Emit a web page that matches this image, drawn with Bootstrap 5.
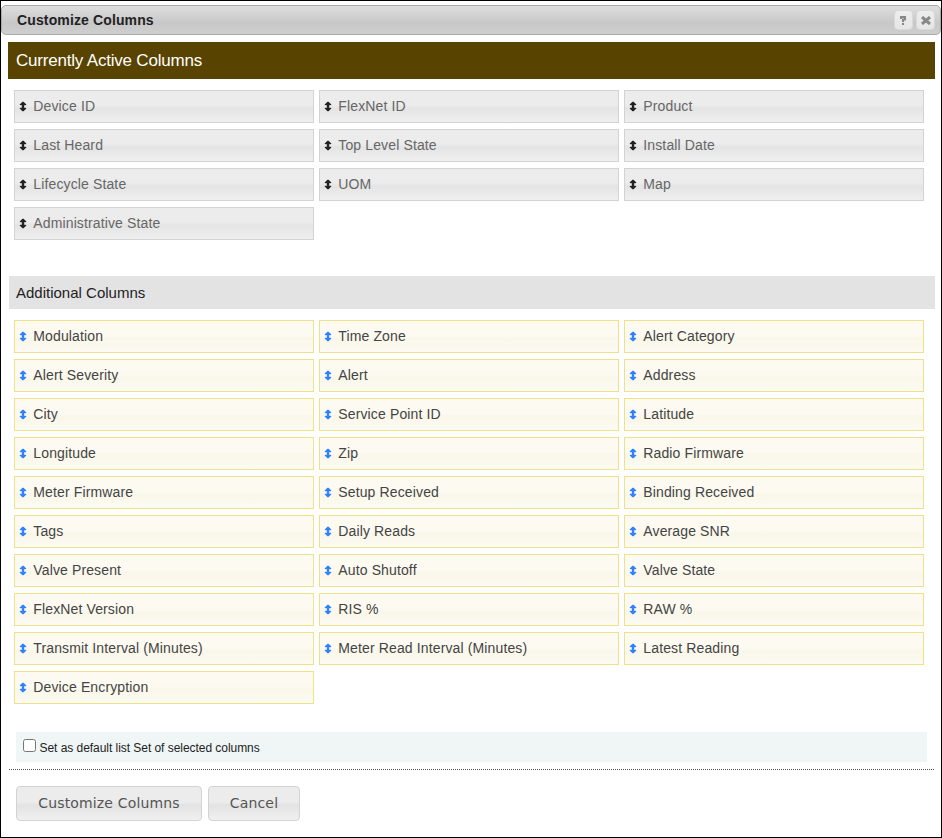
<!DOCTYPE html>
<html lang="en">
<head>
<meta charset="utf-8">
<title>Customize Columns</title>
<link href="https://cdn.jsdelivr.net/npm/bootstrap@5.3.0/dist/css/bootstrap.min.css" rel="stylesheet">
<style>
body{font-family:"Liberation Sans",Arial,sans-serif;background:#fff}
.dialog-frame{height:838px;border:1px solid #000;padding:4px 0 0}
.title-strip{height:30px;border:1px solid #aaa;border-radius:5px;background:linear-gradient(#dedede,#c8c8c8 60%,#cecece);padding:0 5px 0 15px}
.title-strip h1{font-size:14px;letter-spacing:.13px;color:#222;line-height:28px}
.tool-btn{width:19px;height:20px;border:1px solid #d9d9d9;border-radius:4px;background:linear-gradient(#ededed,#e6e6e6);padding:0;line-height:0}
.help-btn{margin-right:3px}
.active-head{height:37px;margin:7px 6px 0 7px;padding:0 8px;background:#594300;color:#fff;font-size:17px;letter-spacing:-.2px;line-height:37px}
.more-head{height:33px;margin:36px 6px 0 8px;padding:0 7px;background:#e3e3e3;color:#222;font-size:15px;line-height:33px}
.tiles{display:grid;grid-template-columns:repeat(3,300px);gap:6px 5px;margin:11px 0 0 13px;padding:0;list-style:none}
.tiles li{height:33px;border:1px solid #d3d3d3;background:linear-gradient(#ececec 0,#ececec 45%,#e4e4e4 55%,#efefef);color:#666;font-size:14px;letter-spacing:.13px;padding:0 5px}
.tiles svg{margin-right:7.3px;fill:#222;stroke:#222;stroke-width:.35px;overflow:visible}
.tiles span{line-height:30px;height:31px}
.tiles.extra li{border-color:#f0e08a;background:linear-gradient(#fdfaf2 0,#fcfaf1 48%,#f9f7e9 58%,#fcfbf3);color:#444}
.tiles.extra svg{fill:#2e83ff;stroke:#2e83ff}
.default-row{height:30px;margin:28px 14px 0 15px;padding:0 7px;background:#f0f6f6;color:#222;font-size:12px}
.default-row input{width:13px;height:13px;margin:0 3.5px 4px 0}
.default-row span{letter-spacing:-.045px;padding-top:2px}
.rule{margin:7px 7px 0 8px;border-top:1px dotted #555}
.action-row{margin:16px 0 0 15px;gap:6px}
.action-row button{height:35px;border:1px solid #d3d3d3;border-radius:4px;background:linear-gradient(#ececec 0,#ececec 45%,#e3e3e3 55%,#f0f0f0);color:#555;font-family:"DejaVu Sans",Verdana,sans-serif;font-size:14px;letter-spacing:.16px;line-height:33px;padding:0}
.save-btn{width:186px}
.cancel-btn{width:92px}
</style>
</head>
<body>
<svg class="d-none"><symbol id="arrows" viewBox="0 0 6 9" overflow="visible"><path d="M2 0h2v1h1v1h1v1H4v3h2v1H5v1H4v1H2V8H1V7H0V6h2V3H0V2h1V1h1z"/></symbol></svg>
<main class="dialog-frame">
<header class="title-strip d-flex align-items-center">
<h1 class="fw-bold mb-0 me-auto">Customize Columns</h1>
<button class="tool-btn help-btn" aria-label="Help"><svg width="7" height="9" viewBox="0 0 7 9" fill="none" stroke="#888" stroke-width="2"><path d="M1 3V1h4v2.5H3V6M2 8h2"/></svg></button>
<button class="tool-btn" aria-label="Close"><svg width="10" height="9" viewBox="0 0 10 9" fill="none" stroke="#888" stroke-width="3"><path d="M1 1l8 7M9 1L1 8"/></svg></button>
</header>
<h2 class="active-head mb-0 fw-normal">Currently Active Columns</h2>
<ul class="tiles mb-0" id="active"></ul>
<h2 class="more-head mb-0 fw-normal">Additional Columns</h2>
<ul class="tiles extra mb-0" id="extra"></ul>
<label class="default-row d-flex align-items-center"><input type="checkbox"><span>Set as default list Set of selected columns</span></label>
<div class="rule"></div>
<div class="action-row d-flex"><button class="save-btn">Customize Columns</button><button class="cancel-btn">Cancel</button></div>
</main>
<script src="https://cdn.jsdelivr.net/npm/bootstrap@5.3.0/dist/js/bootstrap.bundle.min.js"></script>
<script>
const lists={active:"Device ID|FlexNet ID|Product|Last Heard|Top Level State|Install Date|Lifecycle State|UOM|Map|Administrative State",
extra:"Modulation|Time Zone|Alert Category|Alert Severity|Alert|Address|City|Service Point ID|Latitude|Longitude|Zip|Radio Firmware|Meter Firmware|Setup Received|Binding Received|Tags|Daily Reads|Average SNR|Valve Present|Auto Shutoff|Valve State|FlexNet Version|RIS %|RAW %|Transmit Interval (Minutes)|Meter Read Interval (Minutes)|Latest Reading|Device Encryption"};
for(const id in lists)document.getElementById(id).innerHTML=lists[id].split("|").map(t=>`<li class="d-flex align-items-center"><svg width="6" height="9"><use href="#arrows"/></svg><span>${t}</span></li>`).join("");
</script>
</body>
</html>
